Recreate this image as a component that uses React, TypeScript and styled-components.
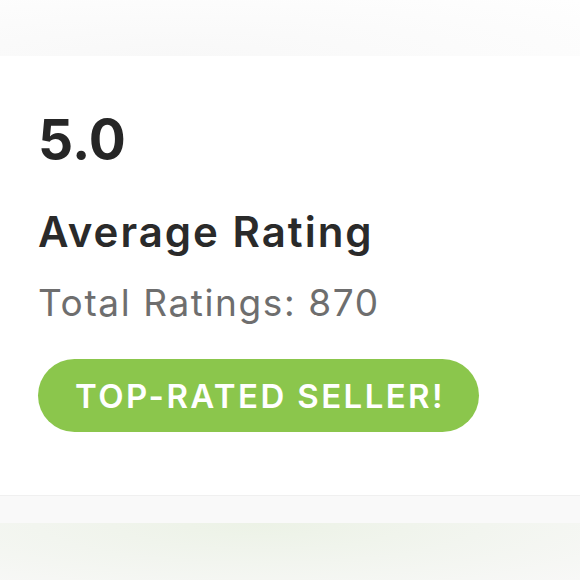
import React from "react";
import styled, { createGlobalStyle } from "styled-components";

const GlobalStyle = createGlobalStyle`
  html, body {
    margin: 0;
    padding: 0;
    background: #fafafa;
  }
  body {
    font-family: Inter, "Open Sans", sans-serif;
  }
`;

const Page = styled.div`
  display: flex;
  flex-direction: column;
  width: 580px;
  height: 580px;
  overflow: hidden;
`;

const TopBand = styled.div`
  height: 56px;
  background: radial-gradient(ellipse at 30% 100%, #f8f8f8 0%, #fbfbfb 50%, #fefefe 100%);
`;

const Card = styled.section`
  display: flex;
  flex-direction: column;
  align-items: flex-start;
  background: #ffffff;
  padding: 56px 0 63px 38px;
  border-bottom: 1px solid #f0f0f0;
  box-shadow: 0 2px 4px rgba(0, 0, 0, 0.02);
`;

const Score = styled.div`
  font-size: 55px;
  font-weight: 700;
  color: #262626;
  line-height: 55px;
`;

const Title = styled.h2`
  margin: 44px 0 0;
  font-size: 42px;
  font-weight: 600;
  color: #2a2a2a;
  line-height: 42px;
  letter-spacing: 2px;
`;

const Count = styled.p`
  margin: 31px 0 0;
  font-size: 37px;
  font-weight: 400;
  color: #6e6e6e;
  line-height: 37px;
  letter-spacing: 1.6px;
`;

const Badge = styled.div`
  margin-top: 38px;
  height: 73px;
  width: 441px;
  box-sizing: border-box;
  padding-left: 3px;
  display: flex;
  align-items: center;
  justify-content: center;
  border-radius: 37px;
  background: #8bc64c;
  color: #ffffff;
  font-size: 33px;
  font-weight: 600;
  letter-spacing: 2.4px;
`;

const Gap = styled.div`
  height: 27px;
  background: #f9f9f9;
`;

const Bottom = styled.div`
  flex: 1;
  background: radial-gradient(ellipse at 45% 0%, #ecf2e6 0%, #f2f5ef 50%, #f8f8f7 100%);
`;

export default function App() {
  return (
    <>
      <GlobalStyle />
      <Page>
        <TopBand />
        <Card>
          <Score>5.0</Score>
          <Title>Average Rating</Title>
          <Count>Total Ratings: 870</Count>
          <Badge>TOP-RATED SELLER!</Badge>
        </Card>
        <Gap />
        <Bottom />
      </Page>
    </>
  );
}
